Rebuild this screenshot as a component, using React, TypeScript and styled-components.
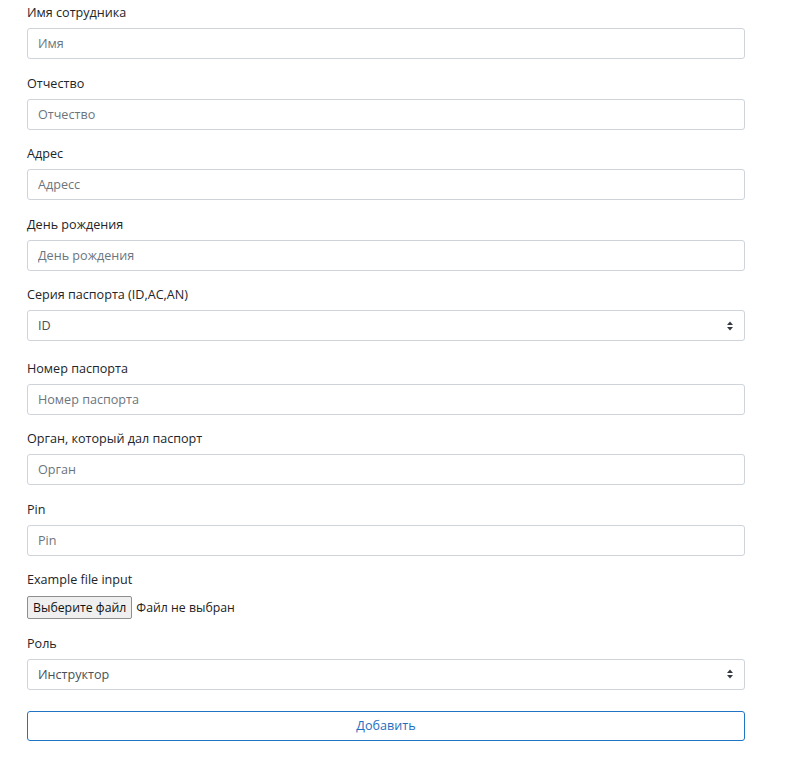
import React from "react";
import styled, { createGlobalStyle } from "styled-components";

const Global = createGlobalStyle`
  html, body { margin: 0; padding: 0; background: #fff; }
  body { font-family: "Open Sans", "Noto Sans", sans-serif; color: #212529; }
  * { box-sizing: border-box; }
`;

const Form = styled.form`
  width: 718px;
  margin-left: 27px;
  padding-top: 3px;
  display: flex;
  flex-direction: column;
`;

const Group = styled.div<{ $mb?: number; $gap?: number }>`
  display: flex;
  flex-direction: column;
  align-items: flex-start;
  gap: ${(p) => p.$gap ?? 5}px;
  margin-bottom: ${(p) => p.$mb ?? 14.5}px;
`;

const Label = styled.label`
  font-size: 12.6px;
  line-height: 20px;
  height: 20px;
  color: #212529;
`;

const Input = styled.input`
  width: 100%;
  height: 31px;
  border: 1px solid #ced4da;
  border-radius: 3px;
  padding: 0 10px;
  font-family: inherit;
  font-size: 12.6px;
  color: #495057;
  background: #fff;
  outline: none;
  &::placeholder { color: #6c757d; opacity: 1; }
`;

const SelectBox = styled.div`
  width: 100%;
  height: 31px;
  border: 1px solid #ced4da;
  border-radius: 3px;
  padding: 0 10px;
  display: flex;
  align-items: center;
  justify-content: space-between;
  font-size: 12.6px;
  color: #495057;
  background: #fff;
`;

const Caret = styled.svg`
  width: 8px;
  height: 10px;
`;

const FileRow = styled.div`
  display: flex;
  align-items: center;
  gap: 4px;
  font-size: 12.6px;
`;

const FileButton = styled.button`
  height: 23px;
  padding: 0 5px;
  border: 1px solid #8f8f8f;
  border-radius: 2px;
  background: #efefef;
  font-family: inherit;
  font-size: 12.3px;
  color: #111;
`;

const FileText = styled.span`
  color: #222;
  font-size: 12.3px;
`;

const Submit = styled.button`
  width: 100%;
  height: 30px;
  margin-top: 6.5px;
  border: 1px solid #1f74c4;
  border-radius: 3px;
  background: #fff;
  color: #1f6fc0;
  font-family: inherit;
  font-size: 12.6px;
`;

function Select({ value }: { value: string }) {
  return (
    <SelectBox>
      <span>{value}</span>
      <Caret viewBox="0 0 8 10">
        <path d="M4 0.5 L7 4 L1 4 Z" fill="#343a40" />
        <path d="M4 9.5 L7 6 L1 6 Z" fill="#343a40" />
      </Caret>
    </SelectBox>
  );
}

const fields = [
  ["Имя сотрудника", "Имя"],
  ["Отчество", "Отчество"],
  ["Адрес", "Адресс"],
  ["День рождения", "День рождения"],
];

const fields2 = [
  ["Номер паспорта", "Номер паспорта"],
  ["Орган, который дал паспорт", "Орган"],
  ["Pin", "Pin"],
];

export default function App() {
  return (
    <>
      <Global />
      <Form onSubmit={(e) => e.preventDefault()}>
        {fields.map(([l, p]) => (
          <Group key={l}>
            <Label>{l}</Label>
            <Input placeholder={p} />
          </Group>
        ))}
        <Group $mb={17.5}>
          <Label>Серия паспорта (ID,AC,AN)</Label>
          <Select value="ID" />
        </Group>
        {fields2.map(([l, p]) => (
          <Group key={l}>
            <Label>{l}</Label>
            <Input placeholder={p} />
          </Group>
        ))}
        <Group $gap={6} $mb={14.5}>
          <Label>Example file input</Label>
          <FileRow>
            <FileButton type="button">Выберите файл</FileButton>
            <FileText>Файл не выбран</FileText>
          </FileRow>
        </Group>
        <Group $mb={14.5}>
          <Label>Роль</Label>
          <Select value="Инструктор" />
        </Group>
        <Submit type="submit">Добавить</Submit>
      </Form>
    </>
  );
}
